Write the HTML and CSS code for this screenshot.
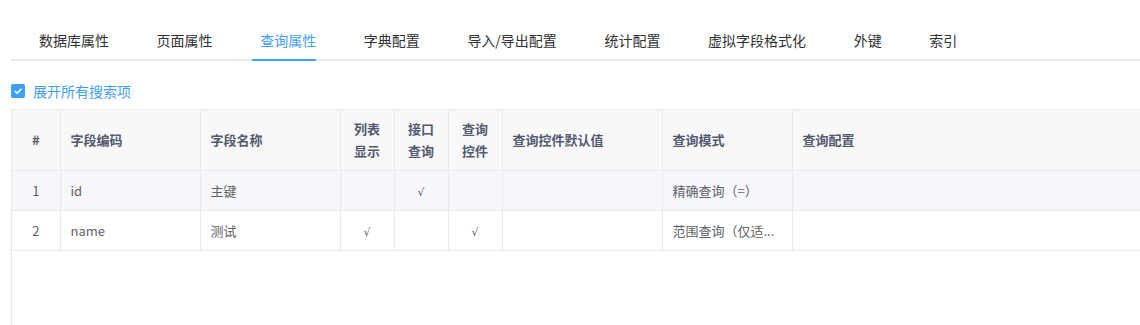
FILE: index.html
```html
<!DOCTYPE html>
<html lang="zh-CN">

<head>
    <meta charset="UTF-8">
    <meta name="viewport" content="width=device-width, initial-scale=1.0">
    <title>查询属性</title>
    <link rel="stylesheet" href="styles.css">
</head>

<body>

    <div class="tabs">
        <div class="tab">数据库属性</div>
        <div class="tab">页面属性</div>
        <div class="tab active">查询属性</div>
        <div class="tab">字典配置</div>
        <div class="tab">导入/导出配置</div>
        <div class="tab">统计配置</div>
        <div class="tab">虚拟字段格式化</div>
        <div class="tab">外键</div>
        <div class="tab">索引</div>
    </div>

    <label class="check">
        <span class="box">
            <svg width="10" height="10" viewBox="0 0 10 10">
                <path d="M1.8 5 L4.2 7.3 L8.4 2.8" fill="none" stroke="#fff" stroke-width="1.5" />
            </svg>
        </span>
        展开所有搜索项
    </label>

    <div class="table-wrap">
        <table class="grid">
            <colgroup>
                <col style="width: 48px">
                <col style="width: 140px">
                <col style="width: 140px">
                <col style="width: 54px">
                <col style="width: 54px">
                <col style="width: 54px">
                <col style="width: 160px">
                <col style="width: 130px">
                <col>
            </colgroup>
            <thead>
                <tr>
                    <th class="center">#</th>
                    <th>字段编码</th>
                    <th>字段名称</th>
                    <th class="center">列表<br>显示</th>
                    <th class="center">接口<br>查询</th>
                    <th class="center">查询<br>控件</th>
                    <th>查询控件默认值</th>
                    <th>查询模式</th>
                    <th>查询配置</th>
                </tr>
            </thead>
            <tbody>
                <tr class="hover">
                    <td class="center">1</td>
                    <td>id</td>
                    <td>主键</td>
                    <td class="center"></td>
                    <td class="center"><span class="tick">√</span></td>
                    <td class="center"></td>
                    <td></td>
                    <td>精确查询（=）</td>
                    <td></td>
                </tr>
                <tr>
                    <td class="center">2</td>
                    <td>name</td>
                    <td>测试</td>
                    <td class="center"><span class="tick">√</span></td>
                    <td class="center"></td>
                    <td class="center"><span class="tick">√</span></td>
                    <td></td>
                    <td>范围查询（仅适...</td>
                    <td></td>
                </tr>
            </tbody>
        </table>
    </div>

</body>

</html>
```

FILE: styles.css
```css
body {
    font-family: "Noto Sans CJK SC", "Noto Sans", sans-serif;
    margin: 0;
    padding: 0 0 0 11px;
    background-color: #ffffff;
    overflow: hidden;
    height: 325px;
}

/* Tabs */
.tabs {
    display: flex;
    margin-top: 22px;
    padding-left: 28px;
    border-bottom: 2px solid #e4e7ed;
    width: 1200px;
}

.tab {
    position: relative;
    height: 37px;
    line-height: 37px;
    font-size: 14px;
    color: #303133;
    margin-right: 47.6px;
}

.tab.active {
    color: #409eff;
}

.tab.active::after {
    content: "";
    position: absolute;
    left: -8px;
    right: 0;
    bottom: -2px;
    height: 2px;
    background-color: #409eff;
}

/* Checkbox */
.check {
    display: flex;
    align-items: center;
    gap: 8px;
    margin-top: 23px;
    height: 14px;
    font-size: 14px;
    color: #409eff;
}

.box {
    width: 14px;
    height: 14px;
    border-radius: 2px;
    background-color: #409eff;
    display: flex;
    align-items: center;
    justify-content: center;
}

/* Table */
.table-wrap {
    margin-top: 11px;
    width: 1200px;
    height: 220px;
    border-left: 1px solid #e8eaec;
}

.grid {
    width: 100%;
    table-layout: fixed;
    border-collapse: collapse;
    font-size: 13px;
}

.grid th,
.grid td {
    border-right: 1px solid #e8eaec;
    border-bottom: 1px solid #e8eaec;
    text-align: left;
    padding: 8px 10px;
    white-space: nowrap;
}

.grid thead tr {
    border-top: 1px solid #e8eaec;
}

.grid th {
    background-color: #f8f8f9;
    color: #515a6e;
    font-weight: bold;
    line-height: 22px;
    height: 44px;
}

.grid td {
    color: #606266;
    line-height: 23px;
    height: 23px;
}

.grid tr.hover td {
    background-color: #f5f7fa;
}

.grid .center {
    text-align: center;
}

.tick {
    font-family: "DejaVu Sans", sans-serif;
    font-size: 11px;
    line-height: 0;
}
```
